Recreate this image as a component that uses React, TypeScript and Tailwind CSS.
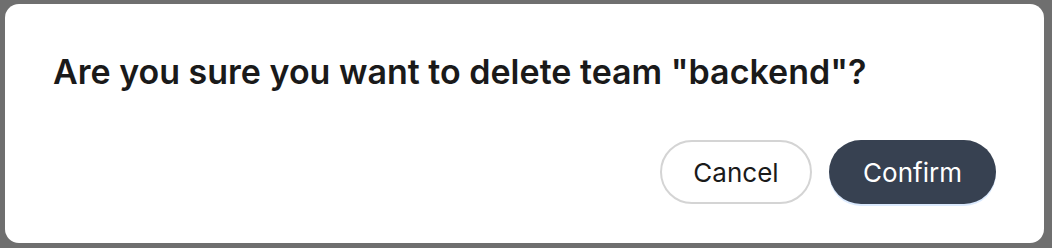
export default function App() {
  return (
    <div className="w-[1052px] h-[248px] bg-[#6f6f6f] pl-[5px] pr-[8px] pt-[4px] pb-[5px] font-['Inter',sans-serif]">
      <div className="h-full bg-white rounded-[14px] px-12 pt-[48px] pb-[39px] flex flex-col justify-between">
        <h2 className="text-[34px] leading-[40px] font-semibold text-[#1a1a1a]">
          Are you sure you want to delete team "backend"?
        </h2>
        <div className="flex justify-end gap-[17px]">
          <button className="h-[64px] w-[152px] rounded-full border-2 border-[#d4d4d4] bg-white text-[26px] text-[#1a1a1a]">
            Cancel
          </button>
          <button className="h-[64px] w-[167px] rounded-full bg-[#374151] text-white text-[26px] shadow-[0_2px_0_0_#dbeafe]">
            Confirm
          </button>
        </div>
      </div>
    </div>
  );
}
